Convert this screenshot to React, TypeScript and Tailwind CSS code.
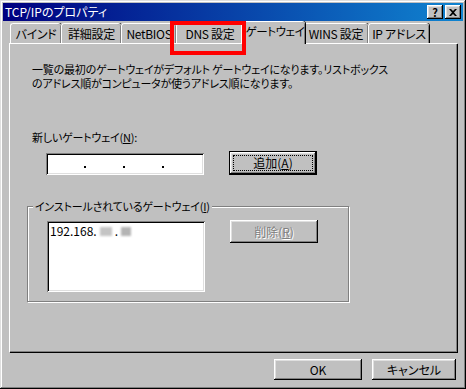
import React from "react";

const font = "font-['Noto_Sans_CJK_JP','Noto_Sans',sans-serif] [font-feature-settings:'palt']";
const raised =
  "shadow-[inset_-1px_-1px_0_#000,inset_1px_1px_0_#fff,inset_-2px_-2px_0_#808080,inset_2px_2px_0_#dfdfdf]";
const sunken =
  "shadow-[inset_1px_1px_0_#808080,inset_-1px_-1px_0_#fff,inset_2px_2px_0_#000,inset_-2px_-2px_0_#dfdfdf]";

function Tab({ label, w, selected }: { label: string; w: number; selected?: boolean }) {
  return (
    <div
      style={{ width: w }}
      className={
        "relative flex items-center justify-center whitespace-nowrap rounded-t-[3px] border-l border-t border-white bg-[#c0c0c0] text-black shadow-[inset_-1px_0_0_#808080,1px_0_0_#000] " +
        (selected
          ? "z-10 -mx-[2px] mb-[-1px] h-[23px] pb-[2px] pl-[3px] text-[11.5px] tracking-[-0.4px]"
          : "h-[20px] text-[12px] tracking-[-0.3px]")
      }
    >
      <span className="leading-none">{label}</span>
    </div>
  );
}

export default function App() {
  return (
    <div
      className={
        "flex h-[389px] w-[466px] flex-col bg-[#c0c0c0] p-[3px] text-[12px] text-black shadow-[inset_-1px_-1px_0_#000,inset_1px_1px_0_#dfdfdf,inset_-2px_-2px_0_#808080,inset_2px_2px_0_#fff] " +
        font
      }
    >
      {/* Title bar */}
      <div className="flex h-[18px] items-center bg-[linear-gradient(90deg,#000080,#1084d0)] pl-[2px] pr-[2px]">
        <span className="text-[12px] leading-none text-white">TCP/IPのプロパティ</span>
        <div className="ml-auto flex gap-[2px]">
          <div className={"flex h-[14px] w-[16px] items-center justify-center bg-[#c0c0c0] text-[11px] font-bold leading-none " + raised}>
            ?
          </div>
          <div className={"flex h-[14px] w-[16px] items-center justify-center bg-[#c0c0c0] " + raised}>
            <svg width="8" height="7" viewBox="0 0 8 7">
              <path d="M0 0h2l2 2 2-2h2L5 3.5 8 7H6L4 5 2 7H0l3-3.5z" fill="#000" />
            </svg>
          </div>
        </div>
      </div>

      {/* Tabs */}
      <div className="ml-[7px] mt-[1px] flex h-[21px] items-end">
        <Tab label="バインド" w={51} />
        <Tab label="詳細設定" w={60} />
        <Tab label="NetBIOS" w={55} />
        <div className="relative">
          <Tab label="DNS 設定" w={67} />
          <div className="pointer-events-none absolute -left-[6px] -right-[3px] -top-[2px] -bottom-[12px] z-20 border-[4px] border-[#ff0000]" />
        </div>
        <Tab label="ゲートウェイ" w={64} selected />
        <Tab label="WINS 設定" w={65} />
        <Tab label="IP アドレス" w={61} />
      </div>

      {/* Panel */}
      <div className="ml-[6px] h-[309px] w-[448px] border-l border-t border-white pl-[22px] pt-[18px] shadow-[inset_-1px_-1px_0_#808080,1px_1px_0_#000]">
        <div className="text-[11px] leading-[14px] tracking-[-0.2px]">
          <div>一覧の最初のゲートウェイがデフォルト ゲートウェイになります。リストボックス</div>
          <div>のアドレス順がコンピュータが使うアドレス順になります。</div>
        </div>

        <div className="mt-[41px] text-[11px] leading-[12px] tracking-[-0.2px]">
          新しいゲートウェイ(<span className="underline">N</span>):
        </div>

        <div className="mt-[8px] flex items-start pl-[14px]">
          <div className={"relative mt-[2px] flex h-[22px] w-[158px] items-end bg-white pb-[5px] " + sunken}>
            <span className="absolute left-[38px] top-[13px] h-[2px] w-[2px] bg-black" />
            <span className="absolute left-[77px] top-[13px] h-[2px] w-[2px] bg-black" />
            <span className="absolute left-[116px] top-[13px] h-[2px] w-[2px] bg-black" />
          </div>
          <div className="ml-[25px] border border-black">
            <div className={"flex h-[22px] w-[86px] items-center justify-center p-[3px] " + raised}>
              <div className="flex h-full w-full items-center justify-center border border-dotted border-black leading-none">
                追加(<span className="underline">A</span>)
              </div>
            </div>
          </div>
        </div>

        {/* Group box */}
        <div className="relative ml-[-5px] mt-[31px] h-[96px] w-[322px] border border-[#808080] shadow-[inset_1px_1px_0_#fff,1px_1px_0_#fff]">
          <div className="absolute -top-[8px] left-[5px] bg-[#c0c0c0] px-[2px] text-[11px] leading-[14px] tracking-[-0.2px]">
            インストールされているゲートウェイ(<span className="underline">I</span>)
          </div>
          <div className="flex items-start pl-[19px] pt-[14px]">
            <div className={"h-[71px] w-[158px] bg-white pl-[3px] pt-[3px] " + sunken}>
              <div className="flex items-center leading-[14px]">
                192.168.
                <span className="mx-[3px] inline-block h-[9px] w-[12px] bg-[#c4c4c4] blur-[1px]" />
                .
                <span className="ml-[3px] inline-block h-[9px] w-[10px] bg-[#b4b4b4] blur-[1px]" />
              </div>
            </div>
            <div className={"ml-[25px] mt-[-1px] flex h-[23px] w-[88px] items-center justify-center leading-none text-[#808080] [text-shadow:1px_1px_0_#fff] " + raised}>
              削除(<span className="underline">R</span>)
            </div>
          </div>
        </div>
      </div>

      {/* Bottom buttons */}
      <div className="mt-[7px] flex justify-end gap-[10px] pr-[7px]">
        <div className={"flex h-[21px] w-[88px] items-center justify-center leading-none " + raised}>OK</div>
        <div className={"flex h-[21px] w-[84px] items-center justify-center leading-none " + raised}>キャンセル</div>
      </div>
    </div>
  );
}
